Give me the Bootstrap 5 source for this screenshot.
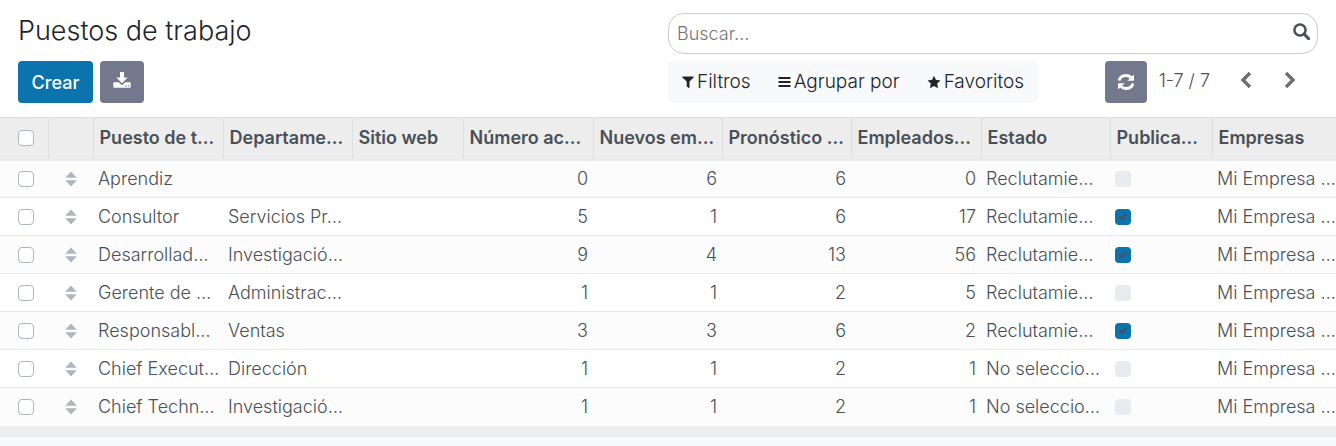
<!DOCTYPE html>
<html lang="es">
<head>
<meta charset="utf-8">
<meta name="viewport" content="width=device-width, initial-scale=1">
<title>Puestos de trabajo</title>
<link href="https://cdn.jsdelivr.net/npm/bootstrap@5.3.0/dist/css/bootstrap.min.css" rel="stylesheet">
<style>
  body { font-family: Inter, "Liberation Sans", sans-serif; font-size: 18px; font-weight: 300; line-height: 26px; color: #495057; background: #f8f9fa; }
  svg { display: block; fill: currentColor; flex: none; }
  .control-panel { background: #fff; padding: 13px 18px 14px; }
  .page-title { font-size: 27px; line-height: 36px; font-weight: 300; color: #212529; }
  .tool-row { margin-top: 7px; }
  .tool-btn { --bs-btn-border-radius: 4px; --bs-btn-color: #fff; --bs-btn-hover-color: #fff; border: 0; height: 42px; font-size: 18px; }
  .btn-create { --bs-btn-bg: #0b74ad; --bs-btn-hover-bg: #09608f; width: 75px; padding: 0; margin-right: 7px; font-weight: 500; }
  .btn-slate { --bs-btn-bg: #74788d; --bs-btn-hover-bg: #636678; padding: 0; }
  .btn-export { width: 44px; }
  .btn-refresh { width: 42px; }
  .search-box { height: 41px; border: 1px solid #c9cacc; border-radius: 16px; padding: 0 7px 0 8px; color: #495057; }
  .search-box input { border: 0; outline: 0; background: none; min-width: 0; font-weight: 300; color: #495057; }
  .search-box input::placeholder { color: #757575; opacity: 1; }
  .search-box button { margin-bottom: 4px; }
  .filter-bar { background: #f8f9fb; border-radius: 4px; height: 42px; width: 370px; padding: 0 14px; font-size: 19px; color: #212529; }
  .filter-bar button { gap: 3px; }
  .plain-btn { border: 0; background: none; padding: 0; color: inherit; font-weight: inherit; }
  .pager-text { margin-left: 12px; padding-bottom: 2px; }
  .pager-btn { color: #6c6f73; margin-left: 28px; }
  .jobs { table-layout: fixed; width: 100%; white-space: nowrap; }
  .jobs thead { background: #ededed; }
  .jobs th { height: 42px; font-weight: 600; padding: 0 5px 0 6px; overflow: hidden; border: solid #dcdfe2; border-width: 1px 1px 2px 0; border-bottom-color: #e7eaed; }
  .jobs th:last-child { border-right: 0; }
  .jobs td { height: 38px; padding: 0 5px; border-bottom: 1px solid #e7eaec; background: #fff; }
  .jobs tbody tr:nth-child(odd) td { background: #fcfcfc; }
  .jobs tbody tr:last-child td { border-bottom: 0; }
  .jobs td.amount { text-align: right; padding-right: 5px; }
  .jobs .pick { padding: 0 0 0 18px; }
  .jobs .form-check-input { display: block; width: 16px; height: 16px; margin: 0; border: 1px solid #adb5bd; border-radius: 4px; }
  .jobs .published { border: 0; background-color: #e9ecef; opacity: 1; }
  .jobs .published:checked { background-color: #0b74ad; background-image: url("data:image/svg+xml,%3csvg xmlns='http://www.w3.org/2000/svg' viewBox='0 0 16 16'%3e%3cpath fill='none' stroke='%23495057' stroke-width='2.2' d='M4.6 7.6l2.2 2.2 4.5-4.6'/%3e%3c/svg%3e"); }
  .handle { color: #adb5bd; margin: 0 auto; }
  .table-foot { height: 11px; background: #ededed; }
</style>
</head>
<body>
<svg class="d-none">
  <symbol id="sort" viewBox="0 0 12 16"><path d="M6 .6 11.700 6.700H.3zM.3 9.300h11.400L6 15.400z"/></symbol>
</svg>

<header class="control-panel">
  <div class="row g-0">
    <div class="col-6"><h1 class="page-title mb-0">Puestos de trabajo</h1></div>
    <div class="col-6">
      <form class="search-box d-flex align-items-center bg-white" role="search">
        <input class="flex-grow-1 p-0" type="text" placeholder="Buscar..." aria-label="Buscar">
        <button class="plain-btn" type="button" aria-label="Buscar">
          <svg width="17" height="17" viewBox="0 0 17 17"><circle cx="7" cy="7" r="5.6" fill="none" stroke="currentColor" stroke-width="2.5"/><path d="m11 11 4.6 4.6" stroke="currentColor" stroke-width="3" stroke-linecap="round"/></svg>
        </button>
      </form>
    </div>
  </div>
  <div class="row g-0 tool-row align-items-start">
    <div class="col-6 d-flex">
      <button class="btn tool-btn btn-create" type="button">Crear</button>
      <button class="btn tool-btn btn-slate btn-export d-flex align-items-center justify-content-center" type="button" aria-label="Exportar">
        <svg class="mb-1" width="18" height="18" viewBox="0 0 18 18"><path fill-rule="evenodd" d="M7 1h4v5.5h3.6L9 12.2 3.4 6.500H7zM1 11.200h4.600L9 14.200l3.400-3H17q.7 0 .7.7v4.100q0 .8-.7.8H1q-.7 0-.7-.8v-4.100q0-.7.7-.7zM12.400 14.200v1.200h1.200v-1.200zm2.500 0v1.200h1.200v-1.200z"/></svg>
      </button>
    </div>
    <div class="col-6 d-flex justify-content-between">
      <div class="filter-bar d-flex align-items-center justify-content-between">
        <button class="plain-btn d-flex align-items-center" type="button">
          <svg width="12" height="14" viewBox="0 0 12 14"><path d="M.6 1.500h10.800q.7.3.2.900L7.500 6.600v6q-.3.700-.900.3L4.700 11.200V6.600L.4 2.400Q-.1 1.800.6 1.500z"/></svg>Filtros</button>
        <button class="plain-btn d-flex align-items-center" type="button">
          <svg width="13" height="12" viewBox="0 0 13 12"><path d="M.5 1h12v2H.5zM.5 5h12v2H.5zM.5 9h12v2H.5z"/></svg>Agrupar por</button>
        <button class="plain-btn d-flex align-items-center" type="button">
          <svg width="14" height="14" viewBox="0 0 14 14"><path d="m7 .7 1.900 4.100 4.600.6-3.300 3.100.8 4.700L7 11l-4 2.200.8-4.700L.5 5.400l4.600-.6z"/></svg>Favoritos</button>
      </div>
      <div class="d-flex align-items-center">
        <button class="btn tool-btn btn-slate btn-refresh d-flex align-items-center justify-content-center" type="button" aria-label="Actualizar">
          <svg width="18" height="18" viewBox="0 0 18 18"><path d="M2 7.500Q3.500 2.500 9 2.500q3 0 5.200 2M16 10.500q-1.500 5-7 5-3 0-5.200-2" fill="none" stroke="currentColor" stroke-width="2.800"/><path d="M17 1.500V7q0 .7-.7.7h-6zM1 16.500V11q0-.7.7-.7h6z"/></svg>
        </button>
        <span class="pager-text">1-7 / 7</span>
        <button class="plain-btn pager-btn" type="button" aria-label="Anterior"><svg class="mb-1" width="16" height="18" viewBox="0 0 16 18"><path d="m12 2-7 7 7 7" fill="none" stroke="currentColor" stroke-width="3.400"/></svg></button>
        <button class="plain-btn pager-btn me-3 pe-1" type="button" aria-label="Siguiente"><svg class="mb-1" width="16" height="18" viewBox="0 0 16 18"><path d="m4 2 7 7-7 7" fill="none" stroke="currentColor" stroke-width="3.400"/></svg></button>
      </div>
    </div>
  </div>
</header>

<main>
  <table class="jobs">
    <colgroup>
      <col style="width:48px"><col style="width:45px"><col style="width:130px"><col style="width:129px"><col style="width:111px"><col style="width:130px"><col style="width:129px"><col style="width:129px"><col style="width:130px"><col style="width:129px"><col style="width:102px"><col style="width:124px">
    </colgroup>
    <thead>
      <tr>
        <th class="pick"><input class="form-check-input" type="checkbox" aria-label="Seleccionar todo"></th>
        <th></th><th>Puesto de t…</th><th>Departame…</th><th>Sitio web</th><th>Número ac…</th><th>Nuevos em…</th><th>Pronóstico …</th><th>Empleados…</th><th>Estado</th><th>Publica…</th><th>Empresas</th>
      </tr>
    </thead>
    <tbody id="rows"></tbody>
  </table>
  <div class="table-foot"></div>
</main>

<script src="https://cdn.jsdelivr.net/npm/bootstrap@5.3.0/dist/js/bootstrap.bundle.min.js"></script>
<script>
  const jobs = [
    ["Aprendiz", "", 0, 6, 6, 0, "Reclutamie…", false],
    ["Consultor", "Servicios Pr…", 5, 1, 6, 17, "Reclutamie…", true],
    ["Desarrollad…", "Investigació…", 9, 4, 13, 56, "Reclutamie…", true],
    ["Gerente de …", "Administrac…", 1, 1, 2, 5, "Reclutamie…", false],
    ["Responsabl…", "Ventas", 3, 3, 6, 2, "Reclutamie…", true],
    ["Chief Execut…", "Dirección", 1, 1, 2, 1, "No seleccio…", false],
    ["Chief Techn…", "Investigació…", 1, 1, 2, 1, "No seleccio…", false]
  ];
  document.getElementById("rows").innerHTML = jobs.map(([name, dept, now, hired, forecast, staff, state, web]) => `
    <tr>
      <td class="pick"><input class="form-check-input" type="checkbox" aria-label="Seleccionar ${name}"></td>
      <td><svg class="handle" width="12" height="16"><use href="#sort"/></svg></td>
      <td>${name}</td><td>${dept}</td><td></td>
      <td class="amount">${now}</td><td class="amount">${hired}</td><td class="amount">${forecast}</td><td class="amount">${staff}</td>
      <td>${state}</td>
      <td><input class="form-check-input published" type="checkbox" aria-label="Publicado" disabled ${web ? "checked" : ""}></td>
      <td>Mi Empresa …</td>
    </tr>`).join("");
</script>
</body>
</html>
